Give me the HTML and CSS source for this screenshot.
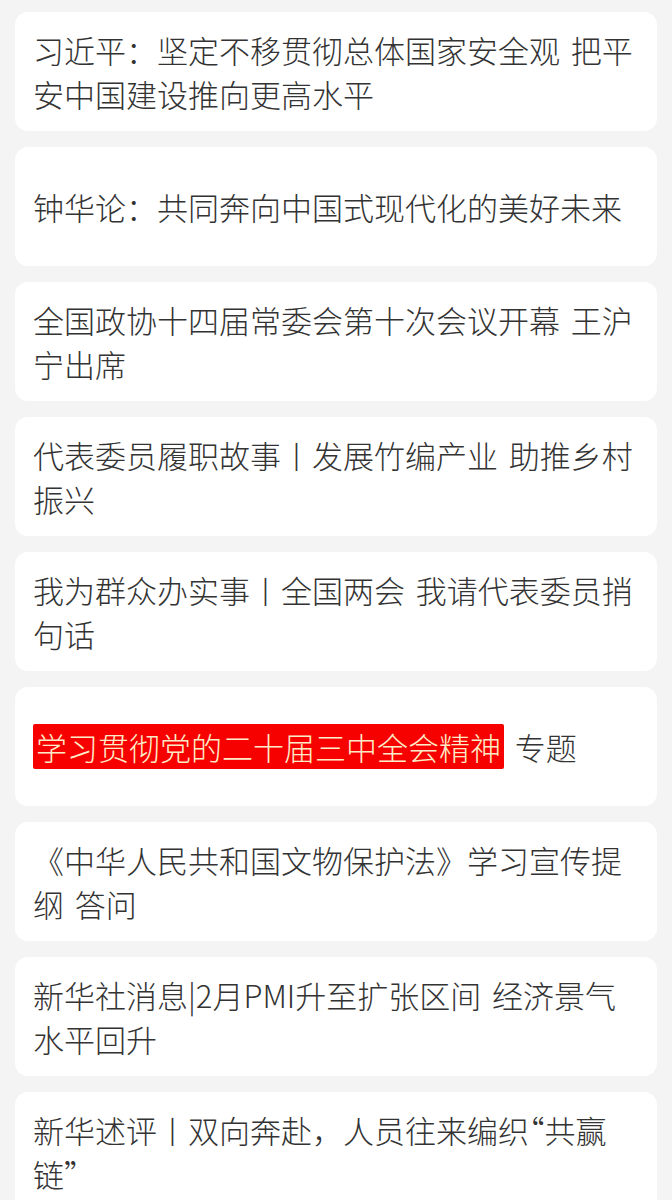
FILE: index.html
```html
<!DOCTYPE html>
<html lang="zh-CN">
<head>
<meta charset="utf-8">
<link rel="stylesheet" href="styles.css">
</head>
<body>
<div class="list">
  <div class="card"><p class="title">习近平：坚定不移贯彻总体国家安全观 把平安中国建设推向更高水平</p></div>
  <div class="card"><p class="title">钟华论：共同奔向中国式现代化的美好未来</p></div>
  <div class="card"><p class="title">全国政协十四届常委会第十次会议开幕 王沪宁出席</p></div>
  <div class="card"><p class="title">代表委员履职故事丨发展竹编产业 助推乡村振兴</p></div>
  <div class="card"><p class="title">我为群众办实事丨全国两会 我请代表委员捎句话</p></div>
  <div class="card"><p class="title"><span class="tag">学习贯彻党的二十届三中全会精神</span> 专题</p></div>
  <div class="card"><p class="title">《中华人民共和国文物保护法》学习宣传提纲 答问</p></div>
  <div class="card"><p class="title">新华社消息|2月PMI升至扩张区间 经济景气水平回升</p></div>
  <div class="card"><p class="title">新华述评丨双向奔赴，人员往来编织<span class="q">“</span>共赢链<span class="q">”</span></p></div>
</div>
</body>
</html>
```
FILE: styles.css
```css
html, body {
  margin: 0;
  padding: 0;
  background: #f4f4f4;
}
body {
  font-family: "Noto Sans CJK SC", "Noto Sans", sans-serif;
  color: #333333;
}
.list {
  display: flex;
  flex-direction: column;
  gap: 16px;
  padding: 12px 15px 0;
}
.card {
  background: #ffffff;
  border-radius: 13px;
  height: 119px;
  display: flex;
  align-items: center;
  padding: 0 18px;
  box-sizing: border-box;
}
.title {
  margin: 0;
  font-size: 31px;
  line-height: 44px;
  font-weight: 300;
  word-spacing: 4px;
}
.tag {
  background: #f70000;
  color: #fdebc8;
  padding: 0 3px;
  border-radius: 2px;
}
.q {
  font-feature-settings: "halt";
}
```
